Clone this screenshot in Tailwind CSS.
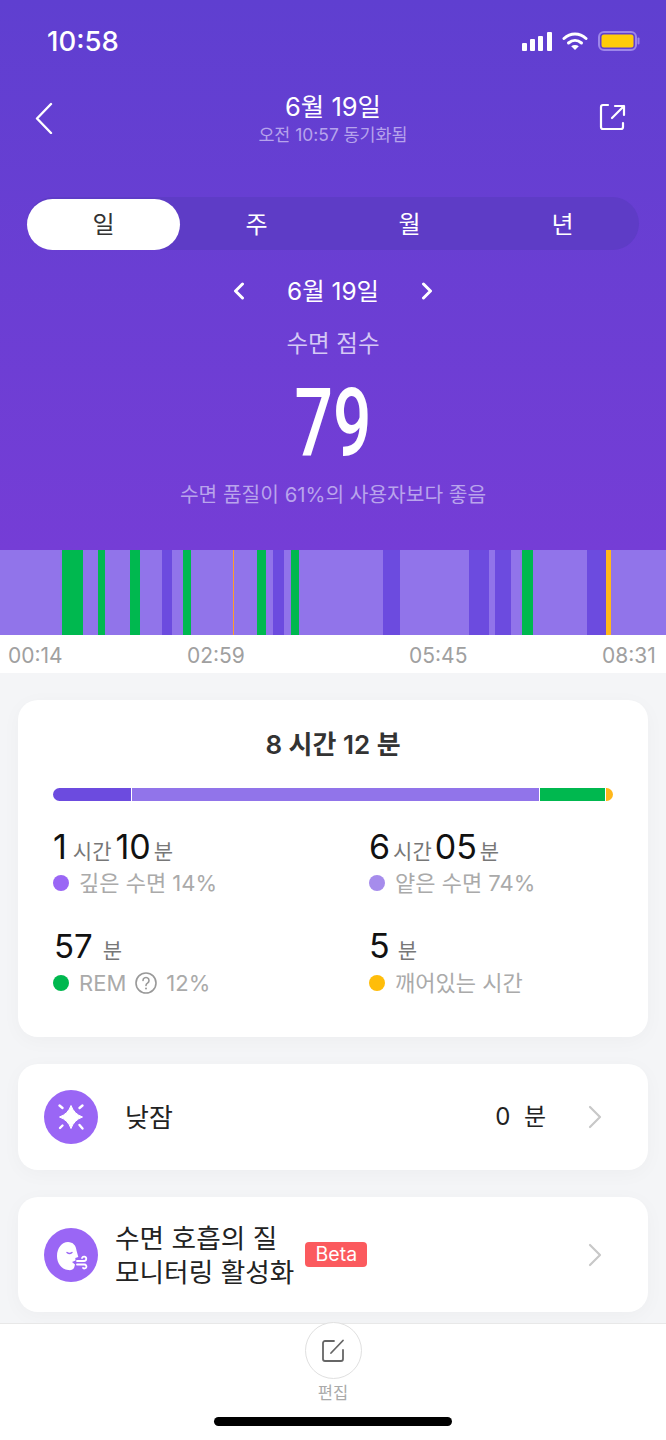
<!DOCTYPE html>
<html lang="ko">
<head>
<meta charset="UTF-8">
<meta name="viewport" content="width=device-width, initial-scale=1.0">
<title>수면</title>
<script src="https://cdn.jsdelivr.net/npm/@tailwindcss/browser@4"></script>
</head>
<body class="bg-[#f4f5f7] font-['Inter','Noto_Sans_CJK_KR',sans-serif]">
<div class="w-[666px] h-[1440px] overflow-hidden flex flex-col relative">

  <!-- 상단 헤더 -->
  <div class="h-[550px] shrink-0 bg-gradient-to-b from-[#5f3fd0] to-[#753dd6] text-white">
    <div class="h-[80px] pl-[47px] pr-[26px] pt-[25px] flex justify-between items-start">
      <span class="text-[27.500px] leading-[32px] font-medium">10:58</span>
      <div class="flex items-center pt-[6px]">
        <svg width="31" height="19" viewBox="0 0 31 19" fill="#fff"><rect x="0" y="11" width="5" height="8" rx="1"/><rect x="8" y="7" width="5" height="12" rx="1"/><rect x="16" y="4" width="5" height="15" rx="1"/><rect x="25" y="0" width="5" height="19" rx="1"/></svg>
        <svg class="ml-[9px]" width="26" height="18" viewBox="0 0 26 18" fill="none" stroke="#fff" stroke-width="3" stroke-linecap="round"><path d="M2 6.500c6.500-6 15.500-6 22 0"/><path d="M6.500 11c4-3.500 9-3.500 13 0"/><path d="M13 18 9.200 14.200c2.200-1.600 5.400-1.600 7.600 0Z" fill="#fff" stroke="none"/></svg>
        <svg class="ml-[10px]" width="42" height="20" viewBox="0 0 42 20"><rect x="1" y="1" width="37" height="18" rx="5" fill="none" stroke="#9d86ea" stroke-width="2"/><rect x="3.500" y="3.500" width="32" height="13" rx="2.500" fill="#ffcc0a"/><rect x="39.500" y="6.500" width="2" height="7" rx="1" fill="#9d86ea"/></svg>
      </div>
    </div>

    <div class="h-[117px] relative flex flex-col items-center">
      <span class="text-[25.500px] leading-[32px] mt-[11px]">6월 19일</span>
      <span class="text-[17.400px] leading-[22px] text-[#b6a3ec] mt-[1px]">오전 10:57 동기화됨</span>
      <svg class="absolute left-[34px] top-[22px]" width="20" height="32" viewBox="0 0 20 32" fill="none" stroke="#fff" stroke-width="2.400" stroke-linecap="round" stroke-linejoin="round"><path d="M17 2 3 16.500 17 31"/></svg>
      <svg class="absolute left-[598px] top-[22px]" width="30" height="30" viewBox="0 0 30 30" fill="none" stroke="#fff" stroke-width="2.200" stroke-linecap="round" stroke-linejoin="round"><path d="M10 3H5a2 2 0 0 0-2 2v20a2 2 0 0 0 2 2h18a2 2 0 0 0 2-2v-4"/><path d="M14 16 26 4M17 4h9v9"/></svg>
    </div>

    <div class="mx-[27px] h-[53px] rounded-full bg-[#5e3cc6] flex items-end text-[24px]">
      <div class="w-[153px] h-[51px] rounded-full bg-white text-[#333] flex items-center justify-center">일</div>
      <div class="w-[153px] h-[51px] flex items-center justify-center">주</div>
      <div class="w-[153px] h-[51px] flex items-center justify-center">월</div>
      <div class="w-[153px] h-[51px] flex items-center justify-center">년</div>
    </div>

    <div class="mt-[23px] flex items-center justify-center h-[36px] text-[24.400px]">
      <svg width="12" height="18" viewBox="0 0 12 18" fill="none" stroke="#fff" stroke-width="3" stroke-linecap="round" stroke-linejoin="round"><path d="M9.500 2 2.500 9l7 7"/></svg>
      <span class="w-[176px] text-center">6월 19일</span>
      <svg width="12" height="18" viewBox="0 0 12 18" fill="none" stroke="#fff" stroke-width="3" stroke-linecap="round" stroke-linejoin="round"><path d="m2.500 2 7 7-7 7"/></svg>
    </div>

    <p class="mt-[20px] text-center text-[23.500px] leading-[30px] text-[#d5c9f5]">수면 점수</p>
    <p class="text-center text-[94px] leading-[100px] mt-[15px] font-medium font-['Roboto',sans-serif] scale-x-[0.72]">79</p>
    <p class="text-center text-[20.300px] leading-[26px] text-[#b9a4ec] mt-[8px]">수면 품질이 61%의 사용자보다 좋음</p>
  </div>

  <!-- 수면 단계 그래프 -->
  <div class="h-[85px] shrink-0 flex bg-[#9174ea]">
    <div class="w-[62px]"></div><div class="w-[21px] bg-[#00b84f]"></div>
    <div class="w-[15px]"></div><div class="w-[7px] bg-[#00b84f]"></div>
    <div class="w-[25px]"></div><div class="w-[10px] bg-[#00b84f]"></div>
    <div class="w-[22px]"></div><div class="w-[10px] bg-[#6c4bdf]"></div>
    <div class="w-[11px]"></div><div class="w-[8px] bg-[#00b84f]"></div>
    <div class="w-[42px]"></div><div class="w-[1px] bg-[#ff9d2a]"></div>
    <div class="w-[23px]"></div><div class="w-[9px] bg-[#00b84f]"></div>
    <div class="w-[7px]"></div><div class="w-[11px] bg-[#6c4bdf]"></div>
    <div class="w-[7px]"></div><div class="w-[8px] bg-[#00b84f]"></div>
    <div class="w-[84px]"></div><div class="w-[17px] bg-[#6c4bdf]"></div>
    <div class="w-[69px]"></div><div class="w-[20px] bg-[#6c4bdf]"></div>
    <div class="w-[6px]"></div><div class="w-[16px] bg-[#6c4bdf]"></div>
    <div class="w-[11px]"></div><div class="w-[11px] bg-[#00b84f]"></div>
    <div class="w-[54px]"></div><div class="w-[19px] bg-[#6c4bdf]"></div>
    <div class="w-[5px] bg-[#ffb71b]"></div>
  </div>
  <div class="h-[38px] shrink-0 bg-white text-[21px] leading-[42px] text-[#a0a0a0]">
    <div class="flex pl-[8px]">
      <span class="w-[179px]">00:14</span><span class="w-[222px]">02:59</span><span class="w-[193px]">05:45</span><span>08:31</span>
    </div>
  </div>

  <div class="flex-1 px-[18px] pt-[27px] flex flex-col gap-[27px]">
    <!-- 수면 시간 카드 -->
    <div class="h-[337px] shrink-0 bg-white rounded-[20px] shadow-[0_4px_20px_rgba(0,0,0,0.03)] px-[35px] pt-[27px]">
      <p class="text-center text-[26px] leading-[36px] font-semibold text-[#333]">8 시간 12 분</p>
      <div class="mt-[25px] h-[13px] rounded-full overflow-hidden flex gap-[1px]">
        <div class="w-[78px] bg-[#6c4bdf]"></div>
        <div class="w-[407px] bg-[#9174ea]"></div>
        <div class="w-[65px] bg-[#00b84f]"></div>
        <div class="flex-1 bg-[#ffb71b]"></div>
      </div>
      <div class="mt-[24px] grid grid-cols-[316px_1fr] gap-y-[27px]">
        <div>
          <p class="h-[44px] flex items-baseline text-[34px] leading-[44px] text-[#111]">1<span class="text-[21px] text-[#777] ml-[6px] mr-[4px]">시간</span>10<span class="text-[21px] text-[#777] ml-[3px]">분</span></p>
          <p class="flex items-center text-[22px] leading-[28px] text-[#aaa]"><span class="w-[16px] h-[16px] rounded-full bg-[#9a66f5] mr-[10px]"></span>깊은 수면 14%</p>
        </div>
        <div>
          <p class="h-[44px] flex items-baseline text-[34px] leading-[44px] text-[#111]">6<span class="text-[21px] text-[#777] mx-[3px]">시간</span>05<span class="text-[21px] text-[#777] ml-[3px]">분</span></p>
          <p class="flex items-center text-[22px] leading-[28px] text-[#aaa]"><span class="w-[16px] h-[16px] rounded-full bg-[#a68cec] mr-[10px]"></span>얕은 수면 74%</p>
        </div>
        <div>
          <p class="h-[44px] flex items-baseline text-[33px] leading-[44px] text-[#111] pl-[1px]">57<span class="text-[21px] text-[#777] ml-[10px]">분</span></p>
          <p class="mt-[1px] flex items-center text-[22px] leading-[28px] text-[#aaa]"><span class="w-[16px] h-[16px] rounded-full bg-[#00b84f] mr-[10px]"></span>REM
            <svg class="mx-[9px]" width="22" height="22" viewBox="0 0 22 22" fill="none" stroke="#999" stroke-width="1.600"><circle cx="11" cy="11" r="10"/><path d="M8 8.500a3 3 0 1 1 4.500 2.600c-1 .6-1.500 1.200-1.500 2.400" stroke-linecap="round"/><circle cx="11" cy="16.500" r="1" fill="#999" stroke="none"/></svg>12%</p>
        </div>
        <div>
          <p class="h-[44px] flex items-baseline text-[34px] leading-[44px] text-[#111]">5<span class="text-[21px] text-[#777] ml-[8px]">분</span></p>
          <p class="mt-[1px] flex items-center text-[22px] leading-[28px] text-[#aaa]"><span class="w-[16px] h-[16px] rounded-full bg-[#ffbd0a] mr-[10px]"></span>깨어있는 시간</p>
        </div>
      </div>
    </div>

    <!-- 낮잠 -->
    <div class="h-[106px] shrink-0 bg-white rounded-[20px] shadow-[0_4px_20px_rgba(0,0,0,0.03)] flex items-center pl-[26px] pr-[46px]">
      <svg width="54" height="54" viewBox="0 0 54 54"><circle cx="27" cy="27" r="27" fill="#9a66f5"/><path d="M27 15.500Q30 24 38.500 27 30 30 27 38.500 24 30 15.500 27 24 24 27 15.500Z" fill="#fff" stroke="#fff" stroke-linejoin="round"/><path d="m15.500 15.500 3 2.500M38.500 15.500l-3 2.500M16 38l2.500-2.500M38.500 38.500l-3-3.500" stroke="#fff" stroke-width="2.400" stroke-linecap="round"/></svg>
      <span class="ml-[27px] text-[26px] text-[#222]">낮잠</span>
      <span class="ml-auto text-[24px] text-[#222]">0&nbsp; 분</span>
      <svg class="ml-[42px]" width="14" height="24" viewBox="0 0 14 24" fill="none" stroke="#c8c8c8" stroke-width="2.200" stroke-linecap="round" stroke-linejoin="round"><path d="m2 2 10 10L2 22"/></svg>
    </div>

    <!-- 호흡 -->
    <div class="h-[115px] shrink-0 bg-white rounded-[20px] shadow-[0_4px_20px_rgba(0,0,0,0.03)] flex items-center pl-[26px] pr-[46px]">
      <svg width="54" height="54" viewBox="0 0 54 54"><circle cx="27" cy="27" r="27" fill="#9a66f5"/><path d="M24 14c5 0 8 3.500 8.500 8.500l1.800 6.500-3 1 .2 2.500-3.500 1.500 3 2.500-.8 3c-1 2.200-3.500 3-6 2.500C17 41 13 35 13 28c0-8 5-14 11-14Z" fill="#fff"/><path d="M23 24.500q2.500 2 5 0" fill="none" stroke="#9a66f5" stroke-width="1.400" stroke-linecap="round"/><g fill="none" stroke="#fff" stroke-width="1.800" stroke-linecap="round"><path d="M33 33h7a2.200 2.200 0 1 0-2-3"/><path d="M33 36.500h7.500a2 2 0 1 1-1.500 3.400"/></g></svg>
      <p class="ml-[17px] text-[26.700px] leading-[34px] text-[#222]">수면 호흡의 질<br>모니터링 활성화</p>
      <span class="ml-[11px] h-[25px] w-[62px] rounded-[4px] bg-[#fb5a5e] text-white text-[19.500px] leading-[25px] text-center">Beta</span>
      <svg class="ml-auto" width="14" height="24" viewBox="0 0 14 24" fill="none" stroke="#c8c8c8" stroke-width="2.200" stroke-linecap="round" stroke-linejoin="round"><path d="m2 2 10 10L2 22"/></svg>
    </div>
  </div>

  <!-- 하단 편집 바 -->
  <div class="absolute left-0 right-0 top-[1323px] h-[117px] bg-white border-t border-[#e8e8e8] flex flex-col items-center">
    <div class="w-[57px] h-[57px] -mt-[2px] rounded-full bg-white border border-[#e0e0e0] flex items-center justify-center">
      <svg width="24" height="24" viewBox="0 0 24 24" fill="none" stroke="#666" stroke-width="1.800" stroke-linecap="round" stroke-linejoin="round"><path d="M13 2H4a2 2 0 0 0-2 2v16a2 2 0 0 0 2 2h16a2 2 0 0 0 2-2v-9"/><path d="M10 14 22 1.500"/></svg>
    </div>
    <span class="text-[16.500px] leading-[20px] mt-[4px] text-[#aaa]">편집</span>
    <div class="mt-[14px] w-[238px] h-[9px] rounded-full bg-black"></div>
  </div>
</div>
</body>
</html>
